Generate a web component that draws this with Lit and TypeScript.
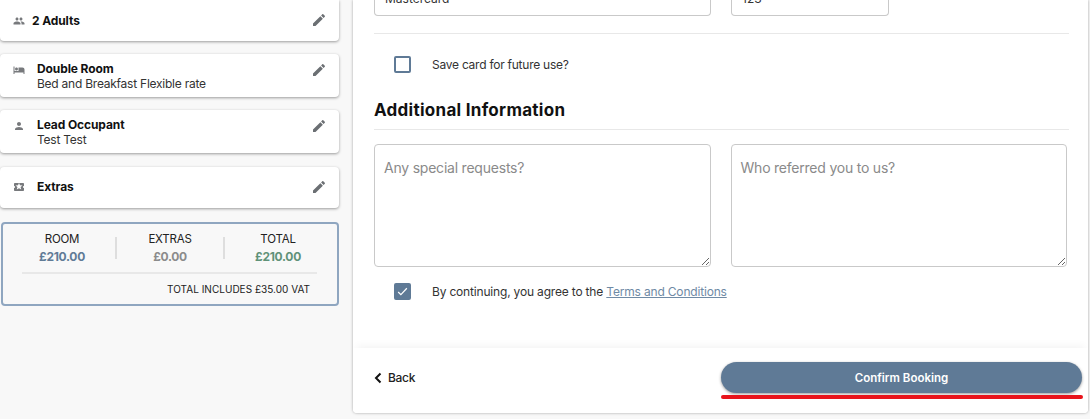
import { LitElement, html, css, svg } from "lit";
import { customElement } from "lit/decorators.js";

const ICONS: Record<string, unknown> = {
  people: svg`<path d="M16 11c1.66 0 2.99-1.34 2.99-3S17.66 5 16 5s-3 1.34-3 3 1.34 3 3 3zm-8 0c1.66 0 2.99-1.34 2.99-3S9.66 5 8 5 5 6.34 5 8s1.34 3 3 3zm0 2c-2.33 0-7 1.17-7 3.5V19h14v-2.5c0-2.33-4.67-3.5-7-3.5zm8 0c-.29 0-.62.02-.97.05 1.16.84 1.97 1.97 1.97 3.45V19h6v-2.5c0-2.33-4.67-3.5-7-3.5z"/>`,
  bed: svg`<path d="M7 13c1.66 0 3-1.34 3-3S8.66 7 7 7s-3 1.34-3 3 1.34 3 3 3zm12-6h-8v7H3V5H1v15h2v-3h18v3h2v-9c0-2.21-1.79-4-4-4z"/>`,
  person: svg`<path d="M12 12c2.21 0 4-1.79 4-4s-1.79-4-4-4-4 1.79-4 4 1.79 4 4 4zm0 2c-2.67 0-8 1.34-8 4v2h16v-2c0-2.66-5.33-4-8-4z"/>`,
  ticket: svg`<path d="M22 10V6c0-1.11-.9-2-2-2H4c-1.1 0-1.99.89-1.99 2v4c1.1 0 1.99.9 1.99 2s-.89 2-2 2v4c0 1.1.9 2 2 2h16c1.1 0 2-.9 2-2v-4c-1.1 0-2-.9-2-2s.9-2 2-2zm-5.58 6.8L12 14.5l-4.42 2.3 1.32-4.8-3.9-3.2 5.06-.3L12 3.9l1.94 4.6 5.06.3-3.9 3.2 1.32 4.8z"/>`,
  edit: svg`<path d="M3 17.25V21h3.75L17.81 9.94l-3.75-3.75L3 17.25zM20.71 7.04c.39-.39.39-1.02 0-1.41l-2.34-2.34c-.39-.39-1.02-.39-1.41 0l-1.83 1.83 3.75 3.75 1.83-1.83z"/>`,
};

const icon = (name: string, cls: string) =>
  html`<svg class=${cls} viewBox="0 0 24 24" aria-hidden="true">${ICONS[name]}</svg>`;

@customElement("app-root")
export class AppRoot extends LitElement {
  static styles = css`
    :host {
      display: block;
      width: 1090px;
      height: 419px;
      overflow: hidden;
      background: #f8f8f8;
      font-family: "Inter", "Liberation Sans", sans-serif;
      color: #1f1f1f;
    }
    .page { display: flex; height: 419px; }
    .side {
      width: 339px;
      flex: none;
      margin-right: 14px;
      display: flex;
      flex-direction: column;
    }
    .card {
      position: relative;
      display: flex;
      background: #fff;
      border-radius: 4px;
      box-shadow: 0 1px 3px rgba(0,0,0,.38);
      margin-bottom: 13px;
      padding-left: 13px;
      box-sizing: border-box;
    }
    .card.adults { height: 41px; border-radius: 0 0 4px 4px; align-items: center; }
    .card.two { height: 43px; padding-top: 8px; }
    .card.extras { height: 41px; align-items: center; padding-bottom: 2px; margin-bottom: 14px; margin-top: 1px; }
    .ico { width: 12px; height: 12px; fill: #77797c; flex: none; }
    .card.two .ico { margin-top: 2px; }
    .adults .ico { margin-right: 7px; }
    .two .ico, .extras .ico { margin-right: 12px; }
    .title { font-size: 12px; font-weight: 700; color: #111; line-height: 14px; letter-spacing: -0.1px; }
    .sub { font-size: 12px; line-height: 15px; color: #333; letter-spacing: -0.24px; }
    .edit {
      position: absolute;
      right: 12px;
      top: 12px;
      width: 16px;
      height: 16px;
      fill: #6b6f73;
    }
    .two .edit { top: 8px; }
    .summary {
      margin-left: 1px;
      height: 84px;
      box-sizing: border-box;
      border: 2px solid #8fa6c0;
      border-radius: 4px;
      padding: 7px 5px 0;
      background: #f8f8f8;
    }
    .cols { display: flex; height: 41px; }
    .col {
      flex: 1;
      text-align: center;
      font-size: 11.5px;
      letter-spacing: -0.2px;
      line-height: 17px;
      position: relative;
      color: #222;
    }
    .col + .col::before {
      content: "";
      position: absolute;
      left: -1px;
      top: 6px;
      height: 22px;
      width: 2px;
      background: #dedede;
    }
    .amt { font-weight: 700; font-size: 12px; letter-spacing: -0.3px; line-height: 18px; }
    .amt.blue { color: #607b96; }
    .amt.grey { color: #8b8b8b; }
    .amt.green { color: #5f9278; }
    .divider { height: 2px; background: #e8e8e8; margin: 0 15px 0 14px; }
    .vat { text-align: right; font-size: 10px; letter-spacing: 0.02px; padding: 8px 22px 0 0; line-height: 14px; color: #222; }

    .panel {
      width: 735px;
      height: 413px;
      flex: none;
      background: #fff;
      box-shadow: 0 0 3px rgba(0,0,0,.35);
      border-radius: 0 0 4px 4px;
      display: flex;
      flex-direction: column;
    }
    .content { flex: 1; padding: 0 21px; height: 348px; box-sizing: border-box; overflow: hidden; }
    .row1 { display: flex; gap: 20px; height: 16px; }
    .field {
      box-sizing: border-box;
      border: 1px solid #c9c9c9;
      border-top: 0;
      border-radius: 0 0 4px 4px;
      padding-left: 10px;
      font-size: 12px;
      line-height: 1;
      color: #333;
      height: 16px;
      overflow: hidden;
    }
    .field span { display: block; margin-top: -7px; }
    .f1 { width: 337px; }
    .f2 { width: 158px; }
    .rule { height: 1px; background: #e8e8e8; }
    .r1 { margin-top: 17px; width: 695px; }
    .check { display: flex; align-items: center; padding-left: 20px; font-size: 12px; letter-spacing: -0.25px; color: #333; }
    .save { height: 60px; }
    .box {
      width: 17px;
      height: 17px;
      box-sizing: border-box;
      border: 2px solid #5f7a96;
      border-radius: 2px;
      margin-right: 21px;
      flex: none;
    }
    .box.on { background: #5f7a96; display: flex; align-items: center; justify-content: center; }
    .box.on svg { width: 13px; height: 13px; fill: none; stroke: #fff; stroke-width: 2.2; }
    h2 { margin: 4px 0 0; font-size: 17px; letter-spacing: 0.28px; line-height: 24px; font-weight: 700; color: #111; }
    .r2 { margin-top: 7px; width: 695px; }
    .areas { display: flex; gap: 20px; margin-top: 14px; }
    textarea {
      display: block;
      width: 337px;
      height: 123px;
      box-sizing: border-box;
      border: 1px solid #c9c9c9;
      border-radius: 4px;
      padding: 14px 9px;
      margin: 0;
      font: 14px "Inter", "Liberation Sans", sans-serif;
      letter-spacing: -0.22px;
      outline: none;
      background: #fff;
    }
    textarea::placeholder { color: #8a8a8a; opacity: 1; }
    .agree { height: 49px; letter-spacing: -0.18px; }
    a { color: #6f8aa5; text-decoration: underline; }
    .foot {
      height: 65px;
      flex: none;
      display: flex;
      align-items: flex-start;
      justify-content: space-between;
      padding: 14px 5px 0 21px;
      box-sizing: border-box;
      box-shadow: 0 -6px 8px -4px rgba(0,0,0,.05);
      background: #fff;
      border-radius: 0 0 4px 4px;
    }
    .back { display: flex; align-items: center; font-size: 12px; letter-spacing: -0.3px; color: #222; height: 31px; font-weight: 500; }
    .back svg { width: 8px; height: 12px; margin-right: 6px; fill: none; stroke: #111; stroke-width: 2; }
    .btnwrap { display: flex; flex-direction: column; width: 362px; }
    .btn {
      height: 31px;
      width: 361px;
      border: 0;
      border-radius: 16px;
      background: #5f7a96;
      color: #fff;
      font: 600 11.5px "Inter", "Liberation Sans", sans-serif;
      box-shadow: 0 1px 3px rgba(0,0,0,.4);
      padding: 0;
    }
    .red { height: 4px; margin-top: 2px; background: #e8131b; border-radius: 2px; }
  `;

  render() {
    return html`
      <div class="page">
        <aside class="side">
          <div class="card adults">
            ${icon("people", "ico")}
            <div class="title">2 Adults</div>
            ${icon("edit", "edit")}
          </div>
          <div class="card two">
            ${icon("bed", "ico")}
            <div><div class="title">Double Room</div><div class="sub">Bed and Breakfast Flexible rate</div></div>
            ${icon("edit", "edit")}
          </div>
          <div class="card two">
            ${icon("person", "ico")}
            <div><div class="title">Lead Occupant</div><div class="sub">Test Test</div></div>
            ${icon("edit", "edit")}
          </div>
          <div class="card extras">
            ${icon("ticket", "ico")}
            <div class="title">Extras</div>
            ${icon("edit", "edit")}
          </div>
          <div class="summary">
            <div class="cols">
              <div class="col">ROOM<div class="amt blue">£210.00</div></div>
              <div class="col">EXTRAS<div class="amt grey">£0.00</div></div>
              <div class="col">TOTAL<div class="amt green">£210.00</div></div>
            </div>
            <div class="divider"></div>
            <div class="vat">TOTAL INCLUDES £35.00 VAT</div>
          </div>
        </aside>
        <main class="panel">
          <div class="content">
            <div class="row1">
              <div class="field f1"><span>Mastercard</span></div>
              <div class="field f2"><span>123</span></div>
            </div>
            <div class="rule r1"></div>
            <label class="check save"><span class="box"></span>Save card for future use?</label>
            <h2>Additional Information</h2>
            <div class="rule r2"></div>
            <div class="areas">
              <textarea placeholder="Any special requests?"></textarea>
              <textarea placeholder="Who referred you to us?"></textarea>
            </div>
            <label class="check agree">
              <span class="box on"><svg viewBox="0 0 24 24"><path d="M4 13l5 5L20 6"/></svg></span>
              <span>By continuing, you agree to the <a href="#">Terms and Conditions</a></span>
            </label>
          </div>
          <div class="foot">
            <div class="back"><svg viewBox="0 0 8 12"><path d="M6.5 1.5L2 6l4.5 4.5"/></svg>Back</div>
            <div class="btnwrap">
              <button class="btn">Confirm Booking</button>
              <div class="red"></div>
            </div>
          </div>
        </main>
      </div>
    `;
  }
}
